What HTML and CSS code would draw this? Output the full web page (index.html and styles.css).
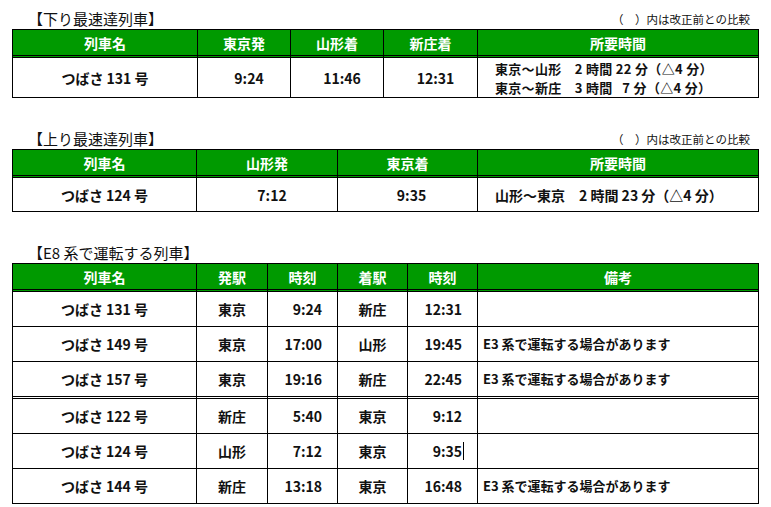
FILE: index.html
```html
<!DOCTYPE html>
<html lang="ja">
<head>
<meta charset="utf-8">
<title>つばさ 時刻</title>
<link rel="stylesheet" href="styles.css">
</head>
<body>
<section class="sec sec1">
  <div class="title-row">
    <h2 class="title">【下り最速達列車】</h2>
    <span class="note">（　）内は改正前との比較</span>
  </div>
  <table class="tbl t1">
    <colgroup><col class="c-name"><col class="c93"><col class="c93"><col class="c94"><col class="c-rest"></colgroup>
    <thead><tr><th>列車名</th><th>東京発</th><th>山形着</th><th>新庄着</th><th>所要時間</th></tr></thead>
    <tbody>
      <tr class="tall"><td>つばさ 131 号</td><td class="tc">9:24</td><td class="tc">11:46</td><td class="tc">12:31</td>
        <td class="dur"><div class="dl">東京～山形　2 時間 22 分（△4 分）</div><div class="dl">東京～新庄　3 時間&nbsp;&nbsp;&nbsp;7 分（△4 分）</div></td></tr>
    </tbody>
  </table>
</section>

<section class="sec">
  <div class="title-row">
    <h2 class="title">【上り最速達列車】</h2>
    <span class="note">（　）内は改正前との比較</span>
  </div>
  <table class="tbl t2">
    <colgroup><col class="c-name2"><col class="c141"><col class="c140"><col class="c-rest"></colgroup>
    <thead><tr><th>列車名</th><th>山形発</th><th>東京着</th><th>所要時間</th></tr></thead>
    <tbody>
      <tr class="mid"><td>つばさ 124 号</td><td class="tc">7:12</td><td class="tc tc2">9:35</td>
        <td class="dur">山形～東京　2 時間 23 分（△4 分）</td></tr>
    </tbody>
  </table>
</section>

<section class="sec">
  <div class="title-row">
    <h2 class="title">【E8 系で運転する列車】</h2>
  </div>
  <table class="tbl t3">
    <colgroup><col class="c-name2"><col class="c71"><col class="c70"><col class="c70"><col class="c70"><col class="c-rest"></colgroup>
    <thead><tr><th>列車名</th><th>発駅</th><th>時刻</th><th>着駅</th><th>時刻</th><th>備考</th></tr></thead>
    <tbody>
      <tr><td>つばさ 131 号</td><td>東京</td><td class="tr">9:24</td><td>新庄</td><td class="tr">12:31</td><td class="rem"></td></tr>
      <tr><td>つばさ 149 号</td><td>東京</td><td class="tr">17:00</td><td>山形</td><td class="tr">19:45</td><td class="rem">E3 系で運転する場合があります</td></tr>
      <tr class="split"><td>つばさ 157 号</td><td>東京</td><td class="tr">19:16</td><td>新庄</td><td class="tr">22:45</td><td class="rem">E3 系で運転する場合があります</td></tr>
      <tr><td>つばさ 122 号</td><td>新庄</td><td class="tr">5:40</td><td>東京</td><td class="tr">9:12</td><td class="rem"></td></tr>
      <tr><td>つばさ 124 号</td><td>山形</td><td class="tr">7:12</td><td>東京</td><td class="tr">9:35<span class="caret"></span></td><td class="rem"></td></tr>
      <tr><td>つばさ 144 号</td><td>新庄</td><td class="tr">13:18</td><td>東京</td><td class="tr">16:48</td><td class="rem">E3 系で運転する場合があります</td></tr>
    </tbody>
  </table>
</section>
</body>
</html>
```

FILE: styles.css
```css
html, body {
  margin: 0;
  padding: 0;
  background: #fff;
}
body {
  font-family: "Noto Sans CJK JP", "Noto Sans", sans-serif;
  color: #111;
  padding-top: 10px;
  width: 771px;
}
.sec {
  margin-left: 12px;
  width: 747px;
}
.sec + .sec {
  margin-top: 32px;
}
.title-row {
  display: flex;
  justify-content: space-between;
  align-items: flex-end;
  height: 19px;
}
.title {
  margin: 0 0 0 16px;
  font-size: 15px;
  font-weight: 400;
  line-height: 17px;
  height: 19px;
  letter-spacing: 0;
}
.note {
  font-size: 11.5px;
  line-height: 14px;
  margin-right: 9px;
  margin-bottom: 3px;
}
.tbl {
  width: 747px;
  table-layout: fixed;
  border-collapse: separate;
  border-spacing: 0;
  border-top: 1px solid #000;
  border-left: 1px solid #000;
  font-size: 14px;
  font-weight: 700;
}
.tbl th, .tbl td {
  box-sizing: border-box;
  border-right: 1px solid #000;
  padding: 0;
  text-align: center;
  white-space: nowrap;
}
.tbl th {
  background: #009a00;
  color: #fff;
  height: 28px;
  line-height: 24px;
  border-bottom: 3px double #000;
  font-weight: 700;
}
.tbl td {
  border-bottom: 1px solid #000;
  height: 35px;
  line-height: 18px;
}
.tbl tr.tall td { height: 40px; }
.tbl tr.mid td { height: 34px; }
.tbl tr.split td { border-bottom: 3px double #000; height: 37px; }

.c-name { width: 185px; }
.c-name2 { width: 184px; }
.c93 { width: 93px; }
.c94 { width: 94px; }
.c141 { width: 141px; }
.c140 { width: 140px; }
.c71 { width: 71px; }
.c70 { width: 70px; }

.tbl td.tc { padding-left: 10px; }
.tbl td.tc2 { padding-left: 8px; }
.tbl td.tr { text-align: right; padding-right: 15px; position: relative; }
.tbl td.dur {
  text-align: left;
  padding-left: 17px;
  line-height: 18px;
  font-weight: 700;
}
.tbl td.dur .dl {
  height: 19px;
  line-height: 19px;
  font-size: 13px;
  letter-spacing: 0.3px;
}
.tbl td.rem {
  text-align: left;
  padding-left: 5px;
  font-size: 13px;
}
.caret {
  position: absolute;
  right: 13px;
  top: 8px;
  width: 1px;
  height: 18px;
  background: #000;
}
```
